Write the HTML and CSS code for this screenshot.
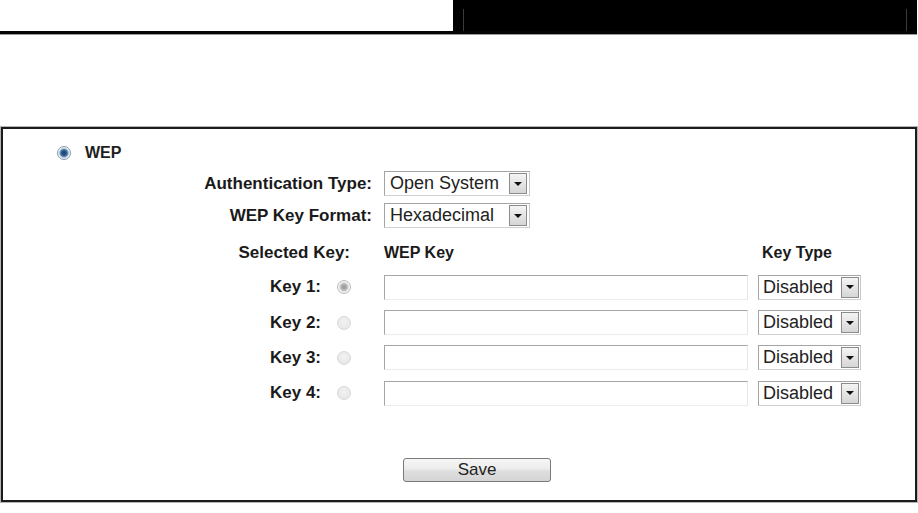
FILE: index.html
```html
<!DOCTYPE html>
<html>
<head>
<meta charset="utf-8">
<link rel="stylesheet" href="styles.css">
</head>
<body>
<div class="header">
  <div class="hdr-spacer"></div>
  <div class="hdr-box"><div class="hdr-inner"></div></div>
</div>
<div class="frame">
  <div class="mode-row">
    <span class="radio radio-on"></span>
    <span class="mode-label">WEP</span>
  </div>
  <div class="form">
    <div class="lbl">Authentication Type:</div>
    <div class="ctl"><div class="select sel-wide"><span class="sel-text">Open System</span><span class="sel-btn"><i class="tri"></i></span></div></div>
    <div></div>

    <div class="lbl row-up">WEP Key Format:</div>
    <div class="ctl row-up"><div class="select sel-wide"><span class="sel-text">Hexadecimal</span><span class="sel-btn"><i class="tri"></i></span></div></div>
    <div class="row-up"></div>

    <div class="lbl lbl-sel">Selected Key:</div>
    <div class="head">WEP Key</div>
    <div class="head head-type">Key Type</div>

    <div class="lbl lbl-key">Key 1:<span class="radio radio-dis-on"></span></div>
    <div class="ctl"><div class="text-input"></div></div>
    <div class="ctl"><div class="select sel-small"><span class="sel-text">Disabled</span><span class="sel-btn"><i class="tri"></i></span></div></div>

    <div class="lbl lbl-key">Key 2:<span class="radio radio-dis"></span></div>
    <div class="ctl"><div class="text-input"></div></div>
    <div class="ctl"><div class="select sel-small"><span class="sel-text">Disabled</span><span class="sel-btn"><i class="tri"></i></span></div></div>

    <div class="lbl lbl-key">Key 3:<span class="radio radio-dis"></span></div>
    <div class="ctl"><div class="text-input"></div></div>
    <div class="ctl"><div class="select sel-small"><span class="sel-text">Disabled</span><span class="sel-btn"><i class="tri"></i></span></div></div>

    <div class="lbl lbl-key">Key 4:<span class="radio radio-dis"></span></div>
    <div class="ctl"><div class="text-input"></div></div>
    <div class="ctl"><div class="select sel-small"><span class="sel-text">Disabled</span><span class="sel-btn"><i class="tri"></i></span></div></div>
  </div>
  <div class="actions">
    <div class="btn">Save</div>
  </div>
</div>
</body>
</html>
```
FILE: styles.css
```css
html, body {
  margin: 0;
  padding: 0;
  background: #fff;
}
body {
  font-family: "Liberation Sans", Arial, sans-serif;
  color: #1e1e1e;
  width: 918px;
  height: 513px;
  overflow: hidden;
}
.header {
  display: flex;
  width: 917px;
  height: 31px;
  border-bottom: 3px solid #050505;
  box-shadow: 0 1px 0 #9a9a9a;
}
.hdr-spacer {
  width: 453px;
}
.hdr-box {
  flex: 1;
  background: #000;
  display: flex;
  align-items: flex-end;
  justify-content: center;
}
.hdr-inner {
  width: 442px;
  height: 22px;
  border-left: 1px solid #3a3a3a;
  border-right: 1px solid #3a3a3a;
}
.frame {
  box-sizing: border-box;
  margin-top: 93px;
  margin-left: 1px;
  width: 916px;
  height: 375px;
  border: 2px solid #1c1c1c;
  box-shadow: 0 0 0 1px #b5b5b5;
}
.mode-row {
  display: flex;
  align-items: center;
  height: 24px;
  margin-top: 12px;
  padding-left: 54px;
}
.mode-label {
  font-weight: bold;
  font-size: 16px;
  margin-left: 14px;
}
.radio {
  display: inline-block;
  box-sizing: border-box;
  width: 14px;
  height: 14px;
  border-radius: 50%;
  flex: none;
}
.radio-on {
  border: 1px solid #8a98a8;
  background: radial-gradient(circle at 50% 50%, #1c3d66 0, #2d5c8e 2.5px, #6f93b8 4px, #e6edf4 5px, #f4f4f4 100%);
}
.radio-dis-on {
  border: 1px solid #bdbdbd;
  background: radial-gradient(circle at 50% 50%, #9a9a9a 0, #acacac 2.5px, #cfcfcf 4px, #f0f0f0 5px, #f6f6f6 100%);
  margin-left: 16px;
}
.radio-dis {
  border: 1px solid #d8d8d8;
  background: radial-gradient(circle at 50% 40%, #f2f2f2 0, #e4e4e4 100%);
  margin-left: 16px;
}
.form {
  display: grid;
  grid-template-columns: 381px 374px 103px;
  grid-template-rows: 25px 25px 23px 25px 25px 25px 25px;
  row-gap: 10.3px;
  margin-top: 6px;
  font-size: 17px;
}
.row-up {
  margin-top: -3px;
  margin-bottom: 3px;
}
.lbl {
  display: flex;
  align-items: center;
  justify-content: flex-end;
  font-weight: bold;
  padding-right: 12px;
  color: #1a1a1a;
  white-space: nowrap;
}
.lbl-sel {
  padding-right: 34px;
}
.lbl-key {
  padding-right: 33px;
}
.head {
  display: flex;
  align-items: center;
  font-weight: bold;
  font-size: 16px;
  color: #1a1a1a;
}
.head-type {
  padding-left: 4px;
}
.ctl {
  display: flex;
  align-items: center;
}
.select {
  box-sizing: border-box;
  display: flex;
  align-items: center;
  height: 25px;
  border: 1px solid #a4a4a4;
  border-right-color: #c8c8c8;
  border-bottom-color: #d0d0d0;
  font-size: 18px;
  color: #222;
  background: #fff;
}
.sel-wide {
  width: 146px;
}
.sel-small {
  width: 103px;
}
.sel-text {
  flex: 1;
  padding-left: 5px;
  white-space: nowrap;
  overflow: hidden;
}
.sel-small .sel-text {
  padding-left: 4px;
}
.sel-btn {
  box-sizing: border-box;
  width: 18px;
  height: 21px;
  margin-right: 1px;
  border: 1px solid #8c8c8c;
  background: linear-gradient(#f4f4f4, #d6d6d6);
  display: flex;
  align-items: center;
  justify-content: center;
}
.sel-wide .sel-btn {
  margin-right: 2px;
}
.tri {
  width: 0;
  height: 0;
  border-left: 4px solid transparent;
  border-right: 4px solid transparent;
  border-top: 4px solid #111;
}
.text-input {
  box-sizing: border-box;
  width: 364px;
  height: 25px;
  border: 1px solid #a6a6a6;
  border-right-color: #e6e6e6;
  border-bottom-color: #ececec;
  background: #fff;
}
.actions {
  display: flex;
  margin-top: 52px;
  padding-left: 400px;
}
.btn {
  box-sizing: border-box;
  width: 148px;
  height: 24px;
  border: 1px solid #7a7a7a;
  border-radius: 3px;
  background: linear-gradient(#f6f6f6 0%, #ececec 45%, #dedede 55%, #d4d4d4 100%);
  display: flex;
  align-items: center;
  justify-content: center;
  font-size: 17px;
  color: #222;
}
```
